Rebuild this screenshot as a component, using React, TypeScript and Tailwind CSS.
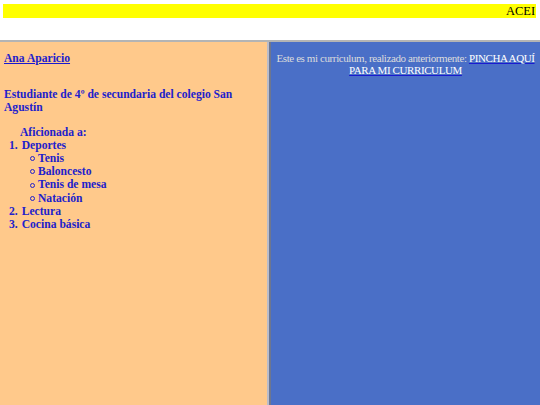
import React from 'react';

const serif = { fontFamily: '"Liberation Serif", "Times New Roman", serif' };

const sports = ['Tenis', 'Baloncesto', 'Tenis de mesa', 'Natación'];

export default function App() {
  return (
    <div className="w-[540px] h-[405px] flex flex-col bg-white overflow-hidden" style={serif}>
      {/* Top frame: marquee */}
      <div className="h-[40px] shrink-0 pt-[4px] pl-[3px] pr-[4px] bg-white">
        <div className="h-[14px] bg-[#ffff00] overflow-hidden whitespace-nowrap text-[12.5px] leading-[14px] text-black pl-[503px]">
          ACEI
        </div>
      </div>
      <div className="h-[2px] shrink-0 bg-[#b4b4b4]" />

      {/* Bottom frames */}
      <div className="flex-1 flex">
        <div className="w-[267px] shrink-0 bg-[#ffc98b] text-[#2121cc] font-bold text-[11.6px] leading-[13.2px] pl-[4px] pt-[10px]">
          <a href="#" className="underline decoration-[#1a1ad0]">Ana Aparicio</a>
          <p className="mt-[23px]">Estudiante de 4º de secundaria del colegio San Agustín</p>
          <p className="mt-[11px] pl-[16px]">Aficionada a:</p>
          <div className="pl-[5px]">
            <div className="flex gap-[4px]"><span>1.</span><span>Deportes</span></div>
            {sports.map(s => (
              <div key={s} className="flex items-center pl-[21px]">
                <span className="w-[5px] h-[5px] rounded-full border border-[#2121cc] mr-[3px]" />
                <span>{s}</span>
              </div>
            ))}
            <div className="flex gap-[4px]"><span>2.</span><span>Lectura</span></div>
            <div className="flex gap-[4px]"><span>3.</span><span>Cocina básica</span></div>
          </div>
        </div>
        <div className="w-[2px] shrink-0 bg-[#b9bccb]" />
        <div className="w-[2px] shrink-0 bg-[#6d7690]" />
        <div className="flex-1 bg-[#4a6fc7] text-center text-[11px] tracking-[-0.4px] leading-[12px] text-[#dcdcdc] pt-[10px] whitespace-nowrap">
          Este es mi curriculum, realizado anteriormente:{' '}
          <a href="#" className="underline decoration-[#1a1ad0] text-white font-normal">
            PINCHA AQUÍ
            <br />
            PARA MI CURRICULUM
          </a>
        </div>
      </div>
    </div>
  );
}
